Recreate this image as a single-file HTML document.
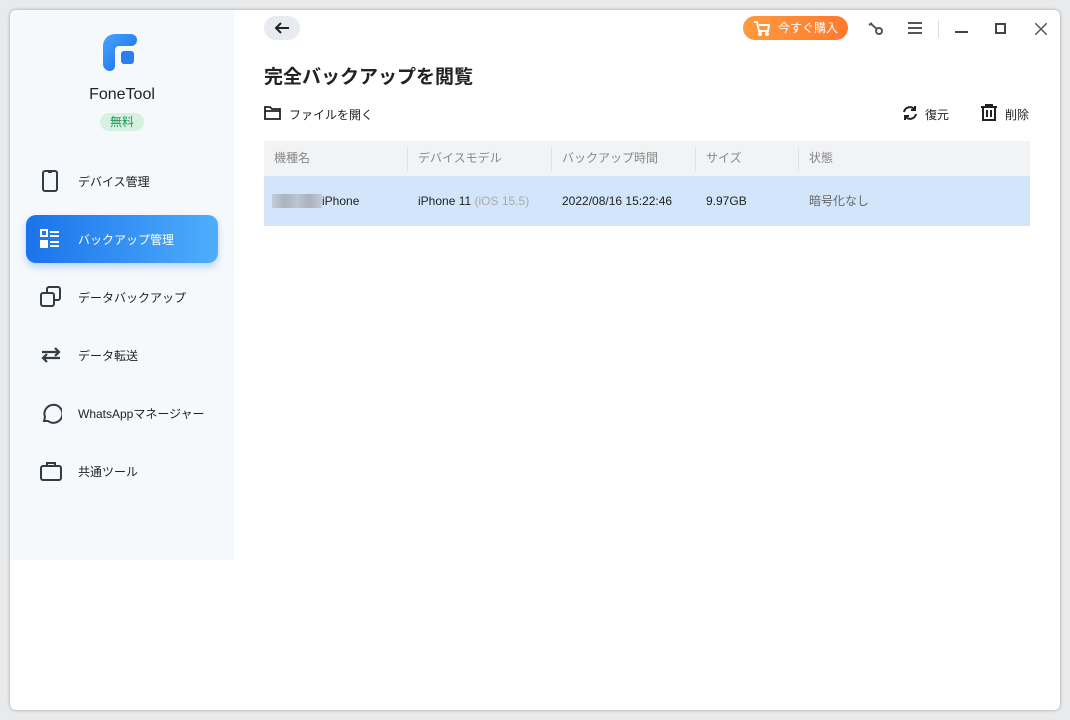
<!DOCTYPE html>
<html><head><meta charset="utf-8"><style>
*{margin:0;padding:0;box-sizing:border-box}
body{width:1070px;height:720px;background:#e9eaec;font-family:"Liberation Sans","Noto Sans CJK JP",sans-serif;position:relative;overflow:hidden;color:#222}
.win{position:absolute;left:10px;top:10px;width:1050px;height:700px;background:#fff;border-radius:6px;box-shadow:0 0 3px rgba(0,0,0,.35);overflow:hidden}
.side{position:absolute;left:0;top:0;width:224px;height:550px;background:#f6f9fc}
.abs{position:absolute}
.nav{position:absolute;left:16px;width:192px;height:48px;border-radius:10px;display:flex;align-items:center;font-size:12px;color:#222}
.nav svg{position:absolute;left:14px}
.nav span{position:absolute;left:52px}
.act{background:linear-gradient(90deg,#1a73ea,#4eaefc);color:#fff;box-shadow:0 4px 8px rgba(40,130,240,.3)}
</style></head><body>
<div class="win">
<div class="side">
  <svg class="abs" style="left:93px;top:24px" width="36" height="38" viewBox="0 0 36 38">
    <defs><linearGradient id="g" x1="0" y1="0" x2="1" y2="1"><stop offset="0" stop-color="#4aa6ff"/><stop offset="1" stop-color="#1565e6"/></linearGradient></defs>
    <path d="M0 12 A12 12 0 0 1 12 0 H28 A6 6 0 0 1 28 12 H16 A4 4 0 0 0 12 16 V32 A5 5 0 0 1 7 37 A7 7 0 0 1 0 30 Z" fill="url(#g)"/>
    <rect x="18" y="17" width="13" height="13" rx="3" fill="#2a7ef0"/>
  </svg>
  <div class="abs" style="left:0;width:224px;top:76px;text-align:center;font-size:16px;color:#222">FoneTool</div>
  <div class="abs" style="left:90px;top:103px;width:44px;height:18px;border-radius:9px;background:#d6f1e2;color:#1f9a57;font-size:12px;text-align:center;line-height:18px">無料</div>
  <div class="nav" style="top:147px"><svg width="20" height="22" viewBox="0 0 20 22" fill="none" stroke="#333b44" stroke-width="2"><rect x="3" y="1" width="14" height="20" rx="2"/><path d="M8 2h4"/></svg><span>デバイス管理</span></div>
  <div class="nav act" style="top:205px"><svg width="20" height="20" viewBox="0 0 20 20" fill="none" stroke="#fff" stroke-width="2"><rect x="1" y="1" width="6" height="6"/><rect x="1" y="12" width="6" height="6" fill="#fff"/><path d="M10 3h9M10 7h9M10 13h9M10 17h9"/></svg><span>バックアップ管理</span></div>
  <div class="nav" style="top:263px"><svg width="22" height="22" viewBox="0 0 22 22" fill="none" stroke="#333b44" stroke-width="2"><rect x="1" y="7" width="13" height="13" rx="2"/><path d="M7 7V3a2 2 0 0 1 2-2h9a2 2 0 0 1 2 2v9a2 2 0 0 1-2 2h-4"/></svg><span>データバックアップ</span></div>
  <div class="nav" style="top:321px"><svg width="22" height="20" viewBox="0 0 22 20" fill="none" stroke="#333b44" stroke-width="2.2"><path d="M2 7h17M15 3l4 4-4 4M20 13H3M7 9l-4 4 4 4"/></svg><span>データ転送</span></div>
  <div class="nav" style="top:379px"><svg width="22" height="22" viewBox="0 0 22 22" fill="none" stroke="#333b44" stroke-width="2"><path d="M4 19l1-4A9 9 0 1 1 8 19Z"/></svg><span>WhatsAppマネージャー</span></div>
  <div class="nav" style="top:437px"><svg width="22" height="20" viewBox="0 0 22 20" fill="none" stroke="#333b44" stroke-width="2"><rect x="1" y="5" width="20" height="14" rx="2"/><path d="M7 5V2h8v3"/></svg><span>共通ツール</span></div>
</div>

<div class="abs" style="left:254px;top:6px;width:36px;height:24px;border-radius:12px;background:#e8ebef"></div>
<svg class="abs" style="left:264px;top:11px" width="16" height="14" viewBox="0 0 16 14" fill="none" stroke="#222" stroke-width="2"><path d="M15 7H2M7 2L2 7l5 5"/></svg>

<div class="abs" style="left:733px;top:6px;width:105px;height:24px;border-radius:12px;background:linear-gradient(90deg,#ff9a3e,#ff7a2e);color:#fff;font-size:12px;line-height:24px;padding-left:35px">今すぐ購入</div>
<svg class="abs" style="left:744px;top:11px" width="16" height="15" viewBox="0 0 16 15" fill="none" stroke="#fff" stroke-width="2"><path d="M0 1h3l2 9h9l1-6H5"/><circle cx="6" cy="13" r="1" fill="#fff"/><circle cx="13" cy="13" r="1" fill="#fff"/></svg>
<svg class="abs" style="left:858px;top:12px" width="16" height="14" viewBox="0 0 16 14" fill="none" stroke="#555" stroke-width="2"><circle cx="11" cy="9" r="3"/><path d="M9 7L3 2M1 3l3-2"/></svg>
<svg class="abs" style="left:898px;top:12px" width="14" height="12" viewBox="0 0 14 12" stroke="#555" stroke-width="2"><path d="M0 1h14M0 6h14M0 11h14"/></svg>
<div class="abs" style="left:928px;top:10px;width:1px;height:18px;background:#ddd"></div>
<div class="abs" style="left:945px;top:21px;width:13px;height:2px;background:#444"></div>
<div class="abs" style="left:985px;top:13px;width:11px;height:11px;border:2px solid #444"></div>
<svg class="abs" style="left:1025px;top:13px" width="12" height="12" viewBox="0 0 12 12" stroke="#555" stroke-width="1.5"><path d="M0 0l12 12M12 0L0 12"/></svg>

<div class="abs" style="left:254px;top:52px;font-size:19px;font-weight:bold;color:#222">完全バックアップを閲覧</div>
<svg class="abs" style="left:254px;top:95px" width="17" height="15" viewBox="0 0 17 15" fill="none" stroke="#222" stroke-width="1.8"><path d="M1 2h5l2 2h8v10H1Z M1 6h15"/></svg>
<div class="abs" style="left:279px;top:96px;font-size:12px">ファイルを開く</div>
<svg class="abs" style="left:892px;top:95px" width="16" height="16" viewBox="0 0 16 16" fill="none" stroke="#222" stroke-width="2"><path d="M2 7a6 6 0 0 1 11-2M14 9a6 6 0 0 1-11 2"/><path d="M13 1v4h-4M3 15v-4h4"/></svg>
<div class="abs" style="left:915px;top:96px;font-size:12px">復元</div>
<svg class="abs" style="left:971px;top:94px" width="16" height="17" viewBox="0 0 16 17" fill="none" stroke="#222" stroke-width="2"><path d="M0 3h16M5 3V1h6v2M2 3v13h12V3M6 6v7M10 6v7"/></svg>
<div class="abs" style="left:995px;top:96px;font-size:12px">削除</div>

<div class="abs" style="left:254px;top:131px;width:766px;height:35px;background:#f2f3f5;font-size:12px;color:#888;line-height:35px">
  <span class="abs" style="left:10px">機種名</span>
  <span class="abs" style="left:143px;top:6px;width:1px;height:24px;background:#e0e2e5"></span>
  <span class="abs" style="left:154px">デバイスモデル</span>
  <span class="abs" style="left:287px;top:6px;width:1px;height:24px;background:#e0e2e5"></span>
  <span class="abs" style="left:298px">バックアップ時間</span>
  <span class="abs" style="left:431px;top:6px;width:1px;height:24px;background:#e0e2e5"></span>
  <span class="abs" style="left:442px">サイズ</span>
  <span class="abs" style="left:534px;top:6px;width:1px;height:24px;background:#e0e2e5"></span>
  <span class="abs" style="left:545px">状態</span>
</div>
<div class="abs" style="left:254px;top:166px;width:766px;height:50px;background:#d3e5fb;font-size:12px;color:#222;line-height:50px">
  <span class="abs" style="left:8px;top:18px;width:50px;height:14px;background:linear-gradient(90deg,#c5cdd8,#aab3bf,#bcc4cf,#a9b2be,#c3cad4)"></span>
  <span class="abs" style="left:58px">iPhone</span>
  <span class="abs" style="left:154px">iPhone 11 <span style="color:#aaa">(iOS 15.5)</span></span>
  <span class="abs" style="left:298px">2022/08/16 15:22:46</span>
  <span class="abs" style="left:442px">9.97GB</span>
  <span class="abs" style="left:545px;color:#666">暗号化なし</span>
</div>
</div>
</body></html>
